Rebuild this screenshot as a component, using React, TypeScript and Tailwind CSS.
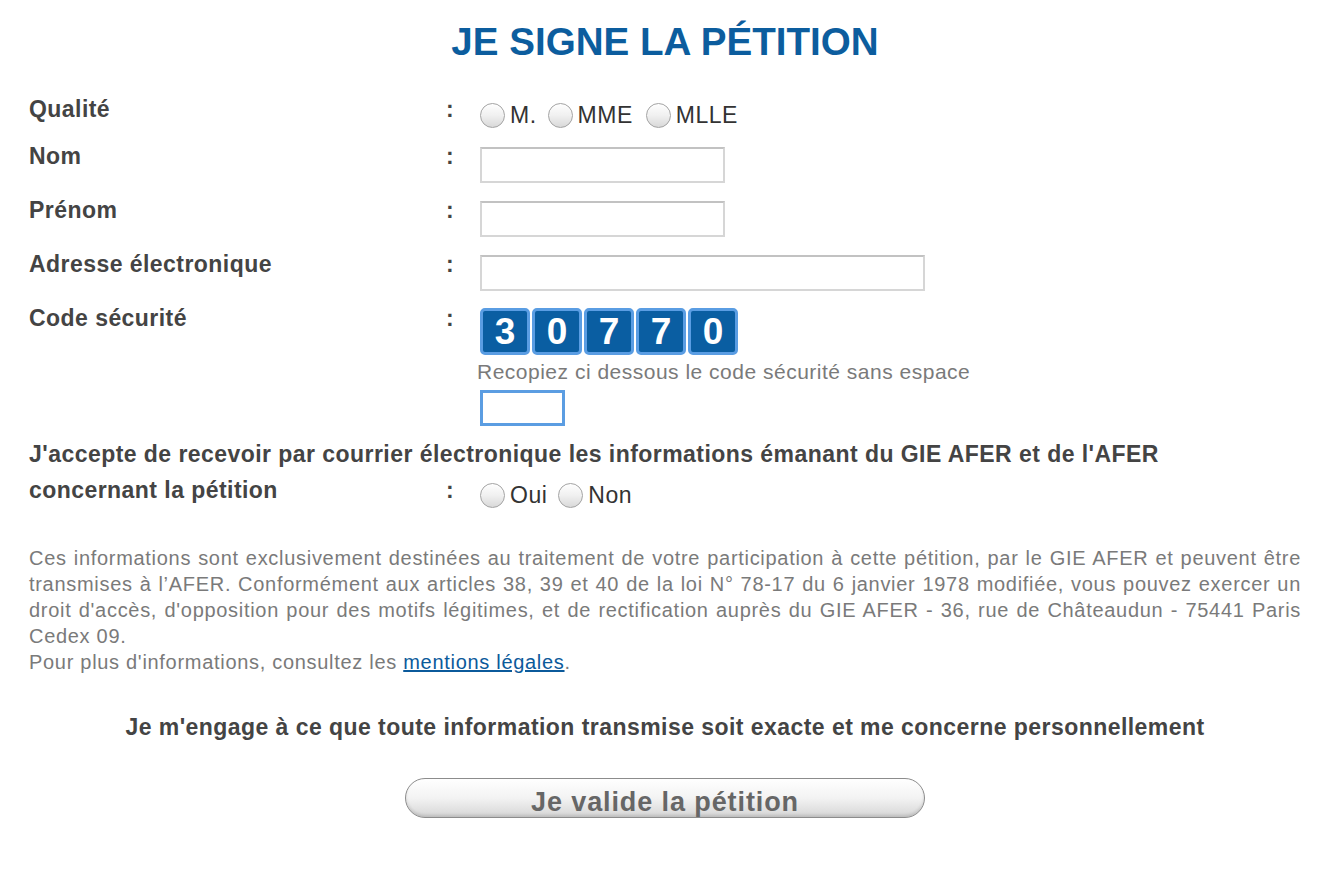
import * as React from "react";

const LABEL = "text-[23px] font-bold tracking-[0.45px] text-[#444]";

function Radio({ label, gap = "mr-[11px]" }: { label: string; gap?: string }) {
  return (
    <label className={`flex items-center ${gap}`}>
      <span className="block h-[25px] w-[25px] rounded-full border border-[#a3a3a3] bg-gradient-to-b from-[#fefefe] via-[#f0f0f0] to-[#d9d9d9] shadow-[inset_0_1px_1px_rgba(255,255,255,0.9)]" />
      <span className="ml-[5px] text-[23px] tracking-[0.5px] text-[#333]">{label}</span>
    </label>
  );
}

function Row({
  label,
  height,
  children,
}: {
  label: string;
  height: string;
  children: React.ReactNode;
}) {
  return (
    <div className={`flex items-start ${height}`}>
      <div className={`w-[417px] leading-[28px] ${LABEL}`}>{label}</div>
      <div className={`w-[34px] leading-[28px] ${LABEL}`}>:</div>
      <div>{children}</div>
    </div>
  );
}

function TextInput({ width }: { width: string }) {
  return (
    <input
      type="text"
      className={`mt-[5px] block h-[36px] ${width} border-2 border-[#d6d6d6] border-t-[#c2c2c2] bg-white outline-none`}
    />
  );
}

export default function App() {
  const code = ["3", "0", "7", "7", "0"];
  return (
    <div className="min-h-[872px] bg-white font-['Liberation_Sans',Arial,sans-serif]">
      <div className="ml-[29px] w-[1272px] pt-[19px]">
        <h1 className="text-center text-[38.6px] font-bold leading-[46px] text-[#0c5d9e]">
          JE SIGNE LA PÉTITION
        </h1>

        <div className="mt-[30px]">
          <Row label="Qualité" height="h-[47px]">
            <div className="mt-[6px] flex h-[28px] items-center">
              <Radio label="M." />
              <Radio label="MME" gap="mr-[13px]" />
              <Radio label="MLLE" />
            </div>
          </Row>
          <Row label="Nom" height="h-[54px]">
            <TextInput width="w-[245px]" />
          </Row>
          <Row label="Prénom" height="h-[54px]">
            <TextInput width="w-[245px]" />
          </Row>
          <Row label="Adresse électronique" height="h-[54px]">
            <TextInput width="w-[445px]" />
          </Row>
          <Row label="Code sécurité" height="">
            <div className="mt-[4px] flex gap-[2px]">
              {code.map((d, i) => (
                <span
                  key={i}
                  className="flex h-[47px] w-[50px] items-center justify-center rounded-[5px] border-[3px] border-[#5a9de3] bg-[#0a5ea2] text-[37px] font-bold text-white"
                >
                  {d}
                </span>
              ))}
            </div>
            <p className="-ml-[3px] mt-[5px] text-[21px] leading-[24px] tracking-[0.5px] text-[#7a7a7a]">
              Recopiez ci dessous le code sécurité sans espace
            </p>
            <input
              type="text"
              className="mt-[6px] block h-[36px] w-[85px] border-[3px] border-[#5b9de2] bg-white outline-none"
            />
          </Row>

          <div className={`mt-[10px] leading-[36px] ${LABEL}`}>
            J'accepte de recevoir par courrier électronique les informations émanant du GIE AFER et
            de l'AFER
          </div>
          <div className="flex h-[36px] items-start">
            <div className={`w-[417px] leading-[36px] ${LABEL}`}>concernant la pétition</div>
            <div className={`w-[34px] leading-[36px] ${LABEL}`}>:</div>
            <div className="mt-[10px] flex h-[26px] items-center">
              <Radio label="Oui" />
              <Radio label="Non" />
            </div>
          </div>
        </div>

        <p className="mt-[37px] text-justify text-[20px] leading-[26px] tracking-[0.7px] text-[#7a7a7a]">
          Ces informations sont exclusivement destinées au traitement de votre participation à cette
          pétition, par le GIE AFER et peuvent être transmises à l’AFER. Conformément aux articles 38,
          39 et 40 de la loi N° 78-17 du 6 janvier 1978 modifiée, vous pouvez exercer un droit d'accès,
          d'opposition pour des motifs légitimes, et de rectification auprès du GIE AFER - 36, rue de
          Châteaudun - 75441 Paris Cedex 09.
          <br />
          Pour plus d'informations, consultez les{" "}
          <a href="#" className="text-[#0b5a9b] underline">
            mentions légales
          </a>
          .
        </p>

        <p className={`mt-[38px] text-center leading-[28px] ${LABEL}`}>
          Je m'engage à ce que toute information transmise soit exacte et me concerne personnellement
        </p>

        <div className="mt-[37px] flex justify-center">
          <button
            type="button"
            className="h-[40px] w-[520px] rounded-full border border-[#8c8c8c] bg-gradient-to-b from-[#ffffff] via-[#f3f3f3] to-[#d6d6d6] pt-[3px] text-[27px] font-bold tracking-[0.9px] text-[#666] shadow-[inset_0_-2px_3px_rgba(0,0,0,0.12)]"
          >
            Je valide la pétition
          </button>
        </div>
      </div>
    </div>
  );
}
